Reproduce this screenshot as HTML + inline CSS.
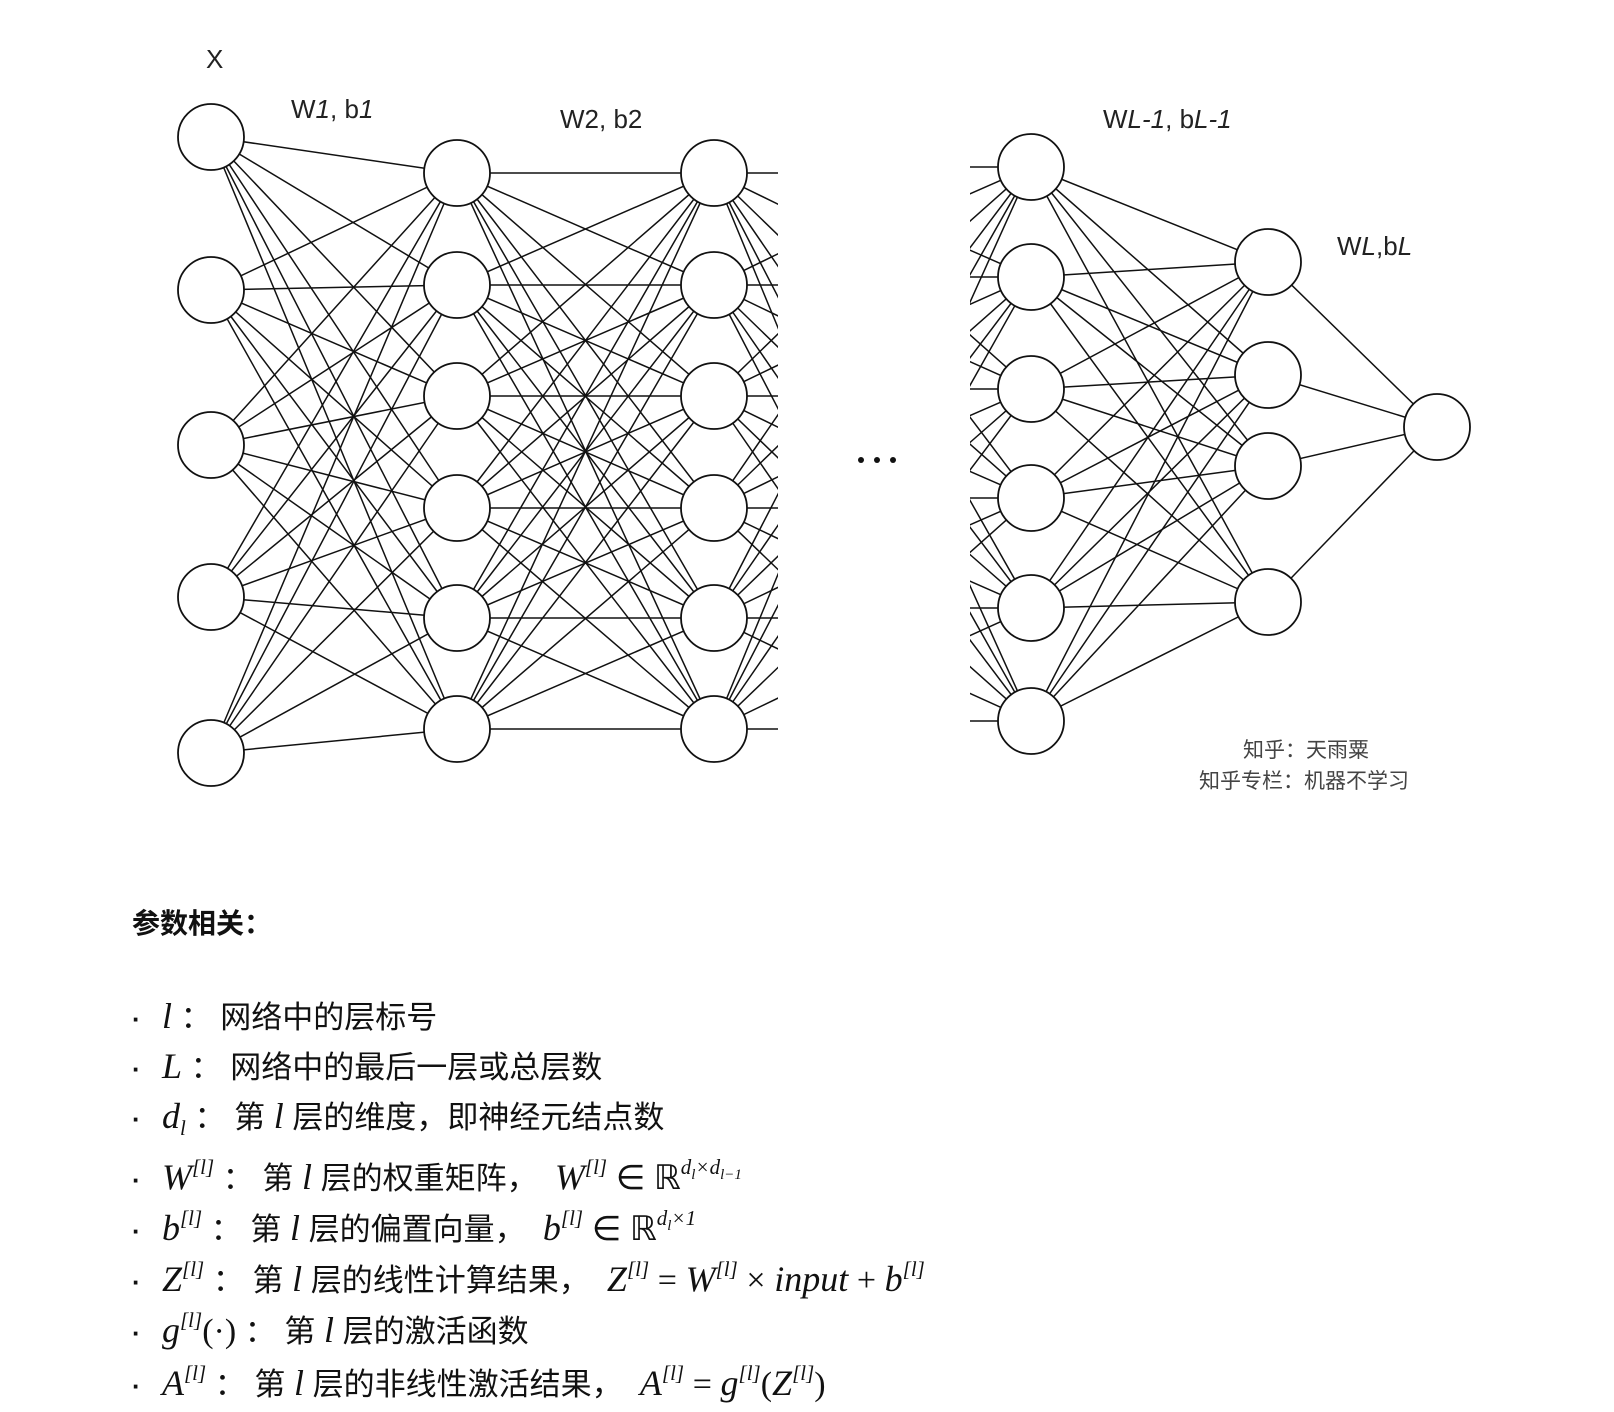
<!DOCTYPE html>
<html><head><meta charset="utf-8"><style>
body{margin:0;width:1614px;height:1412px;background:#fff;position:relative;overflow:hidden;font-family:"Liberation Sans","Noto Sans CJK SC",sans-serif;color:#111}
svg{position:absolute;left:0;top:0}
.h{position:absolute;left:132px;top:902px;font-size:28px;font-weight:bold}
.li{position:absolute;left:132px;font-size:31px;white-space:nowrap;line-height:36px}
.li b{font-weight:bold;display:inline-block;width:30px;font-size:26px}
.m{font-family:"Liberation Serif",serif;font-style:italic;font-size:36px}
.r{font-family:"Liberation Serif",serif;font-style:normal;font-size:34px}
sup{font-family:"Liberation Serif",serif;font-size:21px;vertical-align:15px;font-style:italic}
sub{font-family:"Liberation Serif",serif;font-size:21px;font-style:italic}
</style></head><body>
<svg id="s" width="1614" height="800" viewBox="0 0 1614 800">
<defs><clipPath id="c1"><rect x="0" y="0" width="778" height="800"/></clipPath><clipPath id="c2"><rect x="970" y="0" width="700" height="800"/></clipPath></defs>
<g id="ln" stroke="#111" stroke-width="1.5" fill="none"></g>
<g id="cl" stroke="#111" stroke-width="1.8" fill="#fff"></g>
<g font-family="Liberation Sans,sans-serif" font-size="26" fill="#222">
<text x="206" y="68">X</text>
<text x="291" y="118">W<tspan font-style="italic">1</tspan>, b<tspan font-style="italic">1</tspan></text>
<text x="560" y="128">W2, b2</text>
<text x="1103" y="128">W<tspan font-style="italic">L-1</tspan>, b<tspan font-style="italic">L-1</tspan></text>
<text x="1337" y="255">W<tspan font-style="italic">L</tspan>,b<tspan font-style="italic">L</tspan></text>
</g>
<g fill="#111"><circle cx="861" cy="460" r="3"/><circle cx="877" cy="460" r="3"/><circle cx="893" cy="460" r="3"/></g>
<g font-family="Noto Sans CJK SC,sans-serif" font-size="21" fill="#444">
<text x="1243" y="757">知乎：天雨粟</text>
<text x="1199" y="788">知乎专栏：机器不学习</text>
</g>
</svg>
<div class="h">参数相关：</div>
<div class="li" style="top:998px"><b>·</b><span class="m">l</span> ： 网络中的层标号</div>
<div class="li" style="top:1048px"><b>·</b><span class="m">L</span> ： 网络中的最后一层或总层数</div>
<div class="li" style="top:1098px"><b>·</b><span class="m">d</span><sub>l</sub> ： 第 <span class="m">l</span> 层的维度，即神经元结点数</div>
<div class="li" style="top:1149px"><b>·</b><span class="m">W</span><sup>[l]</sup> ： 第 <span class="m">l</span> 层的权重矩阵， &nbsp;<span class="m">W</span><sup>[l]</sup> <span class="r">∈ ℝ</span><sup>d<sub style="font-size:15px">l</sub>×d<sub style="font-size:15px">l−1</sub></sup></div>
<div class="li" style="top:1200px"><b>·</b><span class="m">b</span><sup>[l]</sup> ： 第 <span class="m">l</span> 层的偏置向量， &nbsp;<span class="m">b</span><sup>[l]</sup> <span class="r">∈ ℝ</span><sup>d<sub style="font-size:15px">l</sub>×1</sup></div>
<div class="li" style="top:1251px"><b>·</b><span class="m">Z</span><sup>[l]</sup> ： 第 <span class="m">l</span> 层的线性计算结果， &nbsp;<span class="m">Z</span><sup>[l]</sup> <span class="r">=</span> <span class="m">W</span><sup>[l]</sup> <span class="r">×</span> <span class="m">input</span> <span class="r">+</span> <span class="m">b</span><sup>[l]</sup></div>
<div class="li" style="top:1302px"><b>·</b><span class="m">g</span><sup>[l]</sup><span class="r">(·)</span> ： 第 <span class="m">l</span> 层的激活函数</div>
<div class="li" style="top:1355px"><b>·</b><span class="m">A</span><sup>[l]</sup> ： 第 <span class="m">l</span> 层的非线性激活结果， &nbsp;<span class="m">A</span><sup>[l]</sup> <span class="r">=</span> <span class="m">g</span><sup>[l]</sup><span class="r">(</span><span class="m">Z</span><sup>[l]</sup><span class="r">)</span></div>
<script>
var NS="http://www.w3.org/2000/svg",ln=document.getElementById("ln"),cl=document.getElementById("cl");
function L(x1,y1,x2,y2,clip){var e=document.createElementNS(NS,"line");e.setAttribute("x1",x1);e.setAttribute("y1",y1);e.setAttribute("x2",x2);e.setAttribute("y2",y2);if(clip)e.setAttribute("clip-path","url(#"+clip+")");ln.appendChild(e);}
function C(x,y){var e=document.createElementNS(NS,"circle");e.setAttribute("cx",x);e.setAttribute("cy",y);e.setAttribute("r",33);cl.appendChild(e);}
var c1=[137,290,445,597,753],c6=[173,285,396,508,618,729],c4=[167,277,389,498,608,721],c5=[262,375,466,602];
var X1=211,X2=457,X3=714,X4=1031,X5=1268,XO=1437,YO=427;
c1.forEach(a=>c6.forEach(b=>L(X1,a,X2,b)));
c6.forEach(a=>c6.forEach(b=>L(X2,a,X3,b)));
c6.forEach(a=>c6.forEach(b=>L(X3,a,X3+230,b,"c1")));
c4.forEach(a=>c4.forEach(b=>L(X4-250,a,X4,b,"c2")));
c4.forEach(a=>c5.forEach(b=>L(X4,a,X5,b)));
c5.forEach(a=>L(X5,a,XO,YO));
c1.forEach(y=>C(X1,y));c6.forEach(y=>{C(X2,y);C(X3,y)});c4.forEach(y=>C(X4,y));c5.forEach(y=>C(X5,y));C(XO,YO);
</script>
</body></html>
